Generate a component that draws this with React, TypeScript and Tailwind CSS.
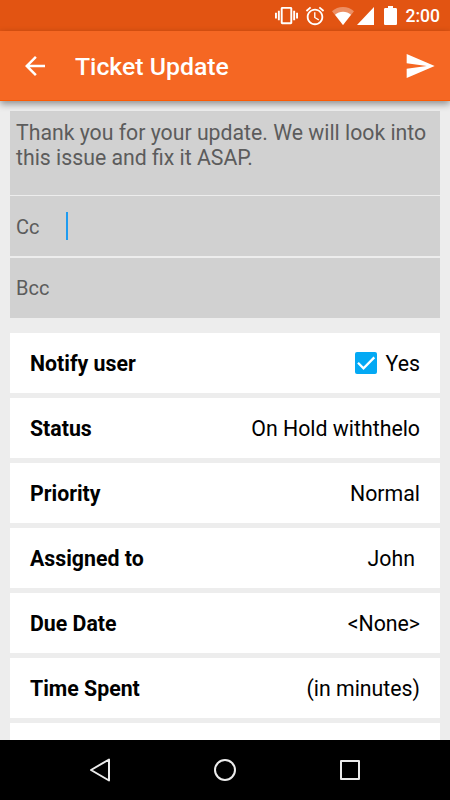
import React from 'react';

const rows = [
  { label: 'Status', value: 'On Hold withthelo' },
  { label: 'Priority', value: 'Normal' },
  { label: 'Assigned to', value: 'John', inset: true },
  { label: 'Due Date', value: '<None>' },
  { label: 'Time Spent', value: '(in minutes)' },
];

function StatusBar() {
  return (
    <div className="h-[31px] shrink-0 bg-[#e25412] flex items-center justify-end pr-[10px] text-white">
      {/* vibrate */}
      <svg className="w-[23px] h-[23px] mr-[6px]" viewBox="0 0 24 24" fill="currentColor">
        <path d="M0 15h2V9H0v6zm3 2h2V7H3v10zm19-8v6h2V9h-2zm-3 8h2V7h-2v10zM16.5 3h-9C6.67 3 6 3.67 6 4.5v15c0 .83.67 1.5 1.5 1.5h9c.83 0 1.5-.67 1.5-1.5v-15c0-.83-.67-1.5-1.5-1.5zM16 19H8V5h8v14z" />
      </svg>
      {/* alarm */}
      <svg className="w-[22px] h-[22px] mr-[6px]" viewBox="0 0 24 24" fill="currentColor">
        <path d="M22 5.72l-4.6-3.86-1.29 1.53 4.6 3.86L22 5.72zM7.88 3.39L6.6 1.86 2 5.71l1.29 1.53 4.59-3.85zM12.5 8H11v6l4.75 2.85.75-1.23-4-2.37V8zM12 4c-4.97 0-9 4.03-9 9s4.02 9 9 9c4.97 0 9-4.03 9-9s-4.03-9-9-9zm0 16c-3.87 0-7-3.13-7-7s3.13-7 7-7 7 3.13 7 7-3.13 7-7 7z" />
      </svg>
      {/* wifi */}
      <svg className="w-[22px] h-[18px] mr-[3px]" viewBox="0 0 22 18" fill="currentColor">
        <path fillOpacity="0.35" d="M11 18L0 4.2C3 1.6 6.8 0 11 0s8 1.6 11 4.2z" />
        <path d="M11 18L3 7.700C5.200 5.900 8 4.800 11 4.800s5.800 1.100 8 2.900z" />
      </svg>
      {/* signal */}
      <svg className="w-[17px] h-[18px] mr-[10px]" viewBox="0 0 17 18" fill="currentColor">
        <path d="M0 18L17 0v18z" />
      </svg>
      {/* battery */}
      <svg className="w-[13px] h-[19px] mr-[9px]" viewBox="0 0 13 19" fill="currentColor">
        <path d="M4 0h5v2h2.700c.7 0 1.300.6 1.300 1.300v14.400c0 .7-.6 1.300-1.300 1.300H1.300C.6 19 0 18.400 0 17.700V3.300C0 2.600.6 2 1.300 2H4z" />
      </svg>
      <span className="text-[17.5px] leading-none font-medium pt-[2px]">2:00</span>
    </div>
  );
}

function Toolbar() {
  return (
    <header className="h-[70px] shrink-0 bg-[#f56723] border-b border-[#fb5a04] flex items-center pl-5 pr-[14px] text-white shadow-[0_3px_7px_rgba(0,0,0,0.4)] z-10">
      <button className="w-[30px] h-[30px]">
        <svg className="w-[30px] h-[30px]" viewBox="0 0 24 24" fill="currentColor">
          <path d="M20 11H7.830l5.590-5.590L12 4l-8 8 8 8 1.410-1.410L7.830 13H20v-2z" />
        </svg>
      </button>
      <h1 className="ml-[25px] flex-1 text-[24.8px] leading-[30px] font-medium pt-[3px]">Ticket Update</h1>
      <button className="w-8 h-8">
        <svg className="w-8 h-8" viewBox="0 0 24 24" fill="currentColor">
          <path d="M2.010 21L23 12 2.010 3 2 10l15 2-15 2z" />
        </svg>
      </button>
    </header>
  );
}

function Row({ label, children }: { label: string; children: React.ReactNode }) {
  return (
    <div className="h-[60px] shrink-0 bg-white px-5 flex items-center justify-between text-[21.3px] leading-[26px] text-black pt-[2px]">
      <span className="font-bold">{label}</span>
      <div className="flex items-center">{children}</div>
    </div>
  );
}

export default function App() {
  return (
    <div className="w-[450px] h-[800px] flex flex-col overflow-hidden bg-[#ededed] font-['Roboto',sans-serif]">
      <StatusBar />
      <Toolbar />

      <main className="flex-1 min-h-0 overflow-hidden px-[10px] pt-[10px] flex flex-col">
        {/* reply message and recipients */}
        <div className="shrink-0 text-[21.25px] text-[#5c5c5c]">
          <div className="h-[84px] bg-[#d1d1d1] px-[6px] pt-[10px] leading-[24.5px]">
            Thank you for your update. We will look into this issue and fix it ASAP.
          </div>
          <div className="mt-px h-[60px] bg-[#d1d1d1] px-[6px] flex items-center">
            <span className="w-[50px] text-[20px] pt-[2px]">Cc</span>
            <span className="w-[2px] h-[28px] bg-[#1e9bf0]"></span>
          </div>
          <div className="mt-[2px] h-[60px] bg-[#d1d1d1] px-[6px] flex items-center">
            <span className="text-[20px]">Bcc</span>
          </div>
        </div>

        <div className="mt-[15px] flex flex-col gap-[5px]">
          <Row label="Notify user">
            <span className="w-[22px] h-[22px] -mt-[2px] mr-[9px] rounded-[2px] bg-[#03a9f4] flex items-center justify-center">
              <svg className="w-[22px] h-[22px]" viewBox="0 0 22 22" fill="none" stroke="white" strokeWidth="2.300">
                <path d="M3 10.800l5.500 5.500L19.300 5.400" />
              </svg>
            </span>
            <span>Yes</span>
          </Row>
          {rows.map((row) => (
            <Row key={row.label} label={row.label}>
              <span className={row.inset ? 'pr-[5px]' : ''}>{row.value}</span>
            </Row>
          ))}
          <div className="h-[60px] shrink-0 bg-white"></div>
        </div>
      </main>

      {/* system navigation */}
      <nav className="h-[60px] shrink-0 bg-black flex items-center justify-between px-[88px] z-10">
        <svg className="w-6 h-6" viewBox="0 0 24 24" fill="none" stroke="#ececec" strokeWidth="2" strokeLinejoin="round">
          <path d="M21 1.500v21L3 12z" />
        </svg>
        <svg className="w-6 h-6" viewBox="0 0 24 24" fill="none" stroke="#ececec" strokeWidth="2">
          <circle cx="12" cy="12" r="10" />
        </svg>
        <svg className="w-6 h-6" viewBox="0 0 24 24" fill="none" stroke="#ececec" strokeWidth="2" strokeLinejoin="round">
          <rect x="3" y="3" width="18" height="18" />
        </svg>
      </nav>
    </div>
  );
}
